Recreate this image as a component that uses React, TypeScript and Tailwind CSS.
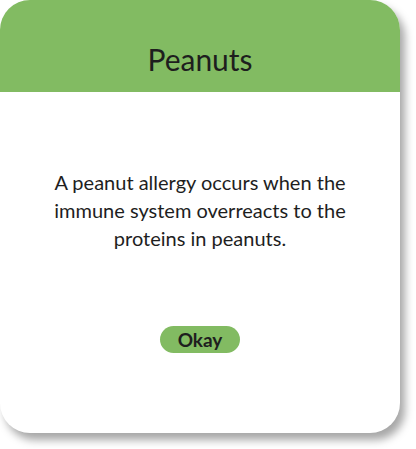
export default function App() {
  return (
    <div className="w-[416px] h-[449px] bg-white" style={{ fontFamily: 'Lato, "Noto Sans", sans-serif' }}>
      {/* Dialog card */}
      <div className="w-[400px] h-[433px] rounded-[30px] bg-white overflow-hidden flex flex-col shadow-[5px_7px_8px_rgba(0,0,0,0.35)]">
        <div className="h-[92px] bg-[#82bb62] flex items-end justify-center pb-[15px]">
          <h1 className="text-[30px] leading-[36px] text-[#1e1e1e] font-normal">Peanuts</h1>
        </div>
        <div className="flex-1 flex flex-col items-center pt-[76px]">
          <p className="w-[340px] text-center text-[20px] leading-[28px] text-[#1e1e1e]">
            A peanut allergy occurs when the immune system overreacts to the proteins in peanuts.
          </p>
          <button
            type="button"
            className="mt-[74px] w-[80px] h-[27px] rounded-full bg-[#82bb62] text-[19px] font-bold text-[#1e1e1e] leading-none flex items-center justify-center"
          >
            Okay
          </button>
        </div>
      </div>
    </div>
  );
}
